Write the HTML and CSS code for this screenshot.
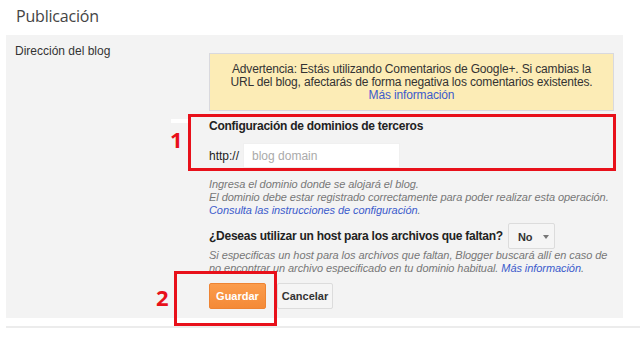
FILE: index.html
```html
<!DOCTYPE html>
<html lang="es">
<head>
  <meta charset="UTF-8" />
  <title>Publicación</title>
  <link rel="stylesheet" href="styles.css">
</head>
<body>

  <h2 class="title">Publicación</h2>

  <div class="panel">
    <div class="label">Dirección del blog</div>

    <div class="content">
      <div class="warning">
        Advertencia: Estás utilizando Comentarios de Google+. Si cambias la<br>
        URL del blog, afectarás de forma negativa los comentarios existentes.<br>
        <a href="#">Más información</a>
      </div>

      <div class="heading">Configuración de dominios de terceros</div>

      <div class="domain-row">
        <span class="prefix">http://</span>
        <input class="domain-input" type="text" placeholder="blog domain">
      </div>

      <p class="help">
        Ingresa el dominio donde se alojará el blog.<br>
        El dominio debe estar registrado correctamente para poder realizar esta operación.<br>
        <a href="#">Consulta las instrucciones de configuración</a>.
      </p>

      <div class="question">
        <span>¿Deseas utilizar un host para los archivos que faltan?</span>
        <button class="select">No <span class="arrow"></span></button>
      </div>

      <p class="help help-host">
        Si especificas un host para los archivos que faltan, Blogger buscará allí en caso de<br>
        no encontrar un archivo especificado en tu dominio habitual. <a href="#">Más información</a>.
      </p>

      <div class="actions">
        <button class="btn btn-save">Guardar</button>
        <button class="btn btn-cancel">Cancelar</button>
      </div>
    </div>
  </div>

  <div class="separator"></div>

  <!-- annotations drawn over the screenshot -->
  <span class="mark-gap"></span>
  <div class="mark mark-1"></div>
  <span class="mark-num num-1">1</span>
  <div class="mark mark-2"></div>
  <span class="mark-num num-2">2</span>

</body>
</html>
```

FILE: styles.css
```css
body {
  margin: 0;
  font-family: 'Liberation Sans', Arial, sans-serif;
  background: #fff;
  color: #333;
  position: relative;
  width: 640px;
  height: 352px;
  overflow: hidden;
}

.title {
  margin: 0;
  height: 35px;
  padding: 5px 0 0 16px;
  box-sizing: border-box;
  font-family: 'Open Sans', sans-serif;
  font-weight: normal;
  font-size: 16px;
  letter-spacing: -0.2px;
  color: #444;
}

.panel {
  margin-left: 6px;
  width: 617px;
  background: #f3f3f3;
  display: flex;
  padding-bottom: 9px;
}

.label {
  width: 203px;
  box-sizing: border-box;
  padding: 9px 0 0 9px;
  font-size: 12px;
  line-height: 14px;
}

.content {
  width: 405px;
  padding-top: 18px;
}

a {
  color: #3b5bcc;
  text-decoration: none;
}

.warning {
  background: #fcecb6;
  border: 1px solid #d9d9de;
  padding: 9px 10px 8px;
  font-size: 12px;
  line-height: 13px;
  letter-spacing: -0.15px;
  text-align: center;
  white-space: nowrap;
  color: #333;
}

.heading {
  margin-top: 7px;
  font-size: 12px;
  line-height: 16px;
  font-weight: bold;
  letter-spacing: -0.25px;
  color: #222;
}

.domain-row {
  margin-top: 9px;
  display: flex;
  align-items: center;
  gap: 4px;
}

.prefix {
  font-size: 12px;
  color: #222;
}

.domain-input {
  width: 157px;
  height: 25px;
  box-sizing: border-box;
  border: 1px solid #f0f0f0;
  background: #fff;
  padding: 0 8px;
  font-family: 'Liberation Sans', Arial, sans-serif;
  font-size: 12px;
}

.domain-input::placeholder {
  color: #aaa;
}

.help {
  margin: 10px 0 0;
  font-size: 11px;
  line-height: 13px;
  font-style: italic;
  letter-spacing: -0.07px;
  color: #777;
  white-space: nowrap;
}

.help-host {
  margin-top: 0;
}

.question {
  margin-top: 6px;
  display: flex;
  align-items: center;
  gap: 5px;
  font-size: 12px;
  font-weight: bold;
  letter-spacing: -0.25px;
  color: #222;
}

.select {
  height: 26px;
  width: 47px;
  box-sizing: border-box;
  border: 1px solid #dcdcdc;
  border-radius: 2px;
  background: #f5f5f5;
  font-family: 'Liberation Sans', Arial, sans-serif;
  font-size: 11px;
  font-weight: bold;
  letter-spacing: 0;
  color: #333;
  padding: 2px 0 0 9px;
  text-align: left;
  display: flex;
  align-items: center;
  gap: 10px;
}

.arrow {
  width: 0;
  height: 0;
  border-left: 3px solid transparent;
  border-right: 3px solid transparent;
  border-top: 4px solid #777;
}

.actions {
  margin-top: 8px;
  display: flex;
  gap: 11px;
}

.btn {
  height: 26px;
  box-sizing: border-box;
  border-radius: 2px;
  font-family: 'Liberation Sans', Arial, sans-serif;
  font-size: 11px;
  font-weight: bold;
  padding: 0;
}

.btn-save {
  width: 57px;
  background: linear-gradient(#fb9c4c, #f48a37);
  border: 1px solid #ee8433;
  color: #fff;
}

.btn-cancel {
  width: 56px;
  background: #f5f5f5;
  border: 1px solid #dcdcdc;
  color: #333;
}

.separator {
  margin: 8px 0 0 6px;
  height: 2px;
  background: #ececec;
}

/* annotations */
.mark {
  position: absolute;
  border: 3px solid #e8101a;
  box-sizing: border-box;
}

.mark-1 {
  left: 188px;
  top: 114px;
  width: 428px;
  height: 57px;
}

.mark-2 {
  left: 174px;
  top: 271px;
  width: 103px;
  height: 55px;
}

.mark-gap {
  position: absolute;
  left: 171px;
  top: 119px;
  width: 17px;
  height: 4px;
  background: #fff;
}

.mark-num {
  position: absolute;
  font-family: 'Open Sans', sans-serif;
  font-weight: bold;
  color: #e8101a;
  font-size: 22px;
  line-height: 22px;
}

.num-1 {
  left: 170px;
  top: 128px;
}

.num-2 {
  left: 156px;
  top: 286px;
}
```
